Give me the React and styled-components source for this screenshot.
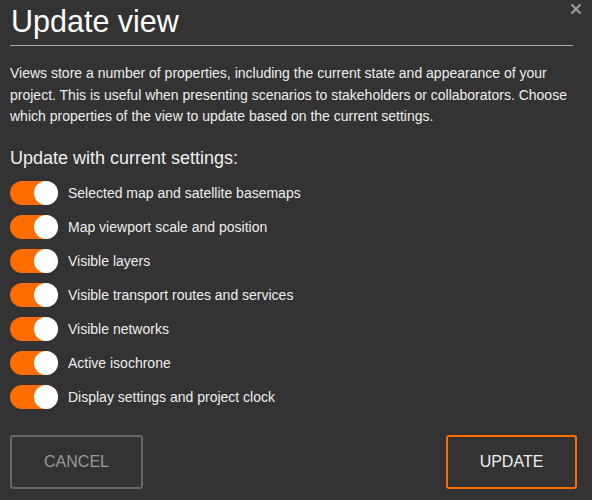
import React, { useState } from "react";
import styled, { createGlobalStyle } from "styled-components";

const GlobalStyle = createGlobalStyle`
  body {
    margin: 0;
    background: #333333;
    font-family: "Liberation Sans", Arial, sans-serif;
  }
`;

const settings = [
  "Selected map and satellite basemaps",
  "Map viewport scale and position",
  "Visible layers",
  "Visible transport routes and services",
  "Visible networks",
  "Active isochrone",
  "Display settings and project clock",
];

const App = () => {
  const [checked, setChecked] = useState(settings.map(() => true));

  const toggle = (i) => {
    setChecked((prev) => prev.map((v, j) => (j === i ? !v : v)));
  };

  return (
    <>
      <GlobalStyle />
      <DialogStyled>
        <CloseButtonStyled aria-label="close">
          <svg width="10" height="10" viewBox="0 0 10 10">
            <path
              d="M1 1 L9 9 M9 1 L1 9"
              stroke="#9a9a9a"
              strokeWidth="2.2"
              strokeLinecap="square"
            />
          </svg>
        </CloseButtonStyled>
        <TitleStyled>Update view</TitleStyled>
        <DescriptionStyled>
          Views store a number of properties, including the current state and
          appearance of your project. This is useful when presenting scenarios
          to stakeholders or collaborators. Choose which properties of the view
          to update based on the current settings.
        </DescriptionStyled>
        <SubtitleStyled>Update with current settings:</SubtitleStyled>
        <ListStyled>
          {settings.map((label, i) => (
            <RowStyled key={label} onClick={() => toggle(i)}>
              <SwitchStyled $on={checked[i]}>
                <KnobStyled $on={checked[i]} />
              </SwitchStyled>
              <LabelStyled>{label}</LabelStyled>
            </RowStyled>
          ))}
        </ListStyled>
        <FooterStyled>
          <ButtonStyled>CANCEL</ButtonStyled>
          <ButtonStyled $primary>UPDATE</ButtonStyled>
        </FooterStyled>
      </DialogStyled>
    </>
  );
};

export default App;

const DialogStyled = styled.div`
  position: relative;
  width: 592px;
  height: 500px;
  box-sizing: border-box;
  padding: 0 19px 0 10px;
  background: #333333;
  color: #eeeeee;
`;
const CloseButtonStyled = styled.button`
  position: absolute;
  top: 4px;
  right: 11px;
  display: flex;
  padding: 0;
  border: none;
  background: none;
  cursor: pointer;
`;
const TitleStyled = styled.h1`
  margin: 0;
  padding: 6px 0 9px 1px;
  font-size: 30.5px;
  font-weight: 400;
  line-height: 30px;
  color: #ffffff;
  border-bottom: 1px solid #a8a8a8;
`;
const DescriptionStyled = styled.p`
  margin: 17px 0 0;
  font-size: 14px;
  line-height: 21.5px;
  color: #eeeeee;
`;
const SubtitleStyled = styled.h2`
  margin: 20px 0 0;
  font-size: 18px;
  font-weight: 400;
  line-height: 20px;
  color: #eeeeee;
`;
const ListStyled = styled.div`
  display: flex;
  flex-direction: column;
  gap: 10px;
  margin-top: 13px;
`;
const RowStyled = styled.div`
  display: flex;
  align-items: center;
  gap: 10px;
  height: 24px;
  cursor: pointer;
`;
const SwitchStyled = styled.span`
  display: flex;
  justify-content: ${(p) => (p.$on ? "flex-end" : "flex-start")};
  width: 48px;
  height: 24px;
  border-radius: 12px;
  background: ${(p) => (p.$on ? "#ff6c00" : "#666666")};
`;
const KnobStyled = styled.span`
  width: 24px;
  height: 24px;
  border-radius: 50%;
  background: #ffffff;
`;
const LabelStyled = styled.span`
  font-size: 14px;
  color: #eeeeee;
`;
const FooterStyled = styled.div`
  display: flex;
  justify-content: space-between;
  margin: 26px -4px 0 0;
`;
const ButtonStyled = styled.button`
  width: ${(p) => (p.$primary ? "131px" : "133px")};
  height: 54px;
  border-radius: 3px;
  border: 2px solid ${(p) => (p.$primary ? "#ff6c00" : "#666666")};
  background: transparent;
  color: ${(p) => (p.$primary ? "#eeeeee" : "#999999")};
  font-family: "Liberation Sans", Arial, sans-serif;
  font-size: 16px;
  cursor: pointer;
`;
